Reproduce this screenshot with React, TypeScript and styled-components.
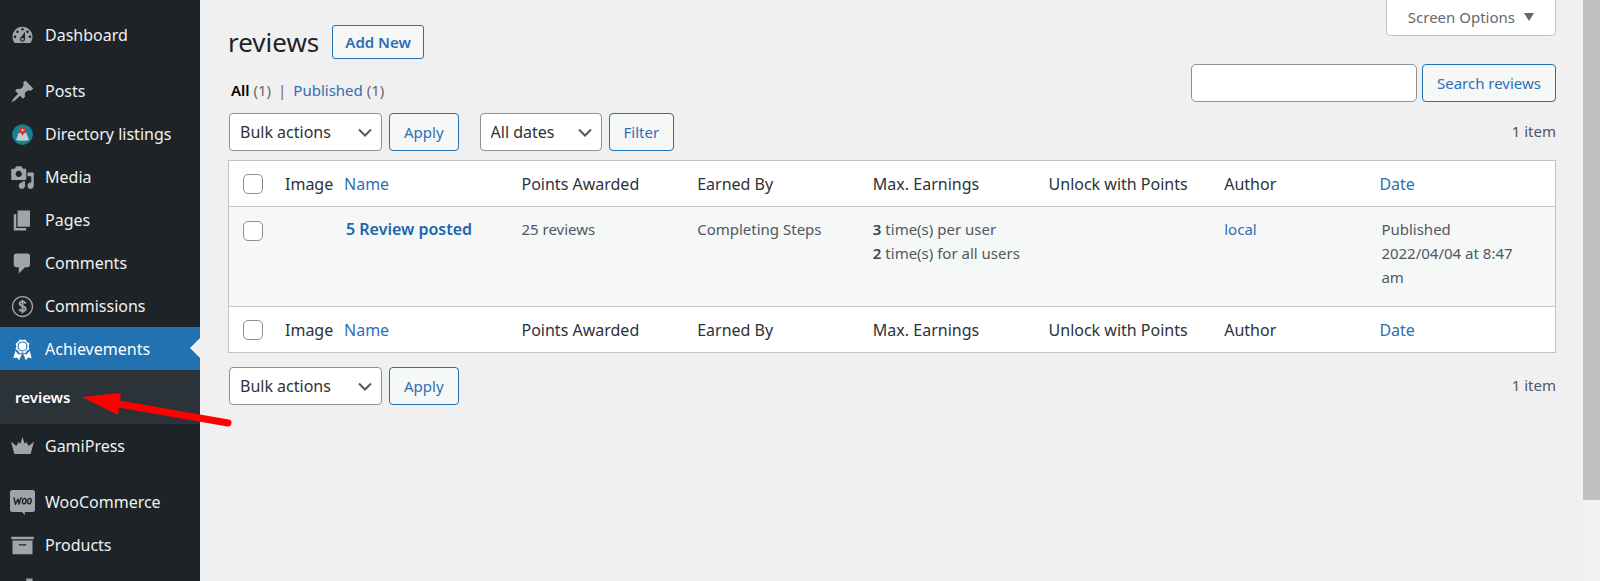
import React from "react";
import styled, { createGlobalStyle } from "styled-components";

const GlobalStyle = createGlobalStyle`
  *, *::before, *::after { box-sizing: border-box; }
  body {
    margin: 0;
    background: #f0f0f0;
    color: #3c434a;
    font-family: "Noto Sans", "Open Sans", sans-serif;
    font-size: 15px;
    line-height: 24px;
  }
  button, input, select { font: inherit; margin: 0; }
  a { color: #2e6fb3; text-decoration: none; }
`;

const Shell = styled.div`
  display: flex;
  height: 100vh;
  overflow: hidden;
`;

/* ---------- Sidebar ---------- */

const Sidebar = styled.nav`
  flex: 0 0 200px;
  padding-top: 13px;
  background: #1d2327;
`;

const Menu = styled.ul`
  margin: 0;
  padding: 0;
  list-style: none;
`;

const MenuItem = styled.li<{ $spaced?: boolean }>`
  position: relative;
  margin-bottom: ${(p) => (p.$spaced ? 13 : 0)}px;
`;

const MenuLink = styled.a<{ $active?: boolean }>`
  display: flex;
  align-items: center;
  gap: 10px;
  height: 43px;
  padding: 1px 0 0 10px;
  font-size: 16px;
  color: ${(p) => (p.$active ? "#fff" : "#f0f0f1")};
  background: ${(p) => (p.$active ? "#2271b1" : "transparent")};
`;

const Glyph = styled.svg<{ $active?: boolean }>`
  flex: none;
  width: 25px;
  height: 25px;
  fill: ${(p) => (p.$active ? "#fff" : "#a0a5aa")};
`;

const Pointer = styled.span`
  position: absolute;
  right: 0;
  top: 11px;
  border: 10px solid transparent;
  border-left: 0;
  border-right-color: #f0f0f0;
`;

const Submenu = styled.div`
  position: relative;
  height: 54px;
  display: flex;
  align-items: center;
  padding-left: 15px;
  background: #2c3338;
`;

const SubmenuLink = styled.a`
  color: #fff;
  font-weight: 600;
`;

const Arrow = styled.svg`
  position: absolute;
  z-index: 2;
  left: 80px;
  top: 18px;
  width: 156px;
  height: 42px;
  pointer-events: none;
`;

const DashboardIcon = () => (
  <path d="M3.76 16h12.48c1.1-1.37 1.76-3.11 1.76-5 0-4.42-3.58-8-8-8s-8 3.58-8 8c0 1.89.66 3.63 1.76 5zM10 4c.55 0 1 .45 1 1s-.45 1-1 1-1-.45-1-1 .45-1 1-1zM6 6c.55 0 1 .45 1 1s-.45 1-1 1-1-.45-1-1 .45-1 1-1zm8 0c.55 0 1 .45 1 1s-.45 1-1 1-1-.45-1-1 .45-1 1-1zm-5.37 5.55L12 7v6c0 1.1-.9 2-2 2s-2-.9-2-2c0-.57.24-1.08.63-1.45zM4 10c.55 0 1 .45 1 1s-.45 1-1 1-1-.45-1-1 .45-1 1-1zm12 0c.55 0 1 .45 1 1s-.45 1-1 1-1-.45-1-1 .45-1 1-1zm-5 3c0-.55-.45-1-1-1s-1 .45-1 1 .45 1 1 1 1-.45 1-1z" />
);

const PinIcon = () => (
  <path d="M10.44 3.02l1.82-1.82 6.36 6.35-1.83 1.82c-1.05-.68-2.48-.57-3.41.36l-.75.75c-.92.93-1.04 2.35-.35 3.41l-1.83 1.82-2.41-2.41-2.8 2.79c-.42.42-3.38 2.71-3.8 2.29s1.86-3.39 2.28-3.81l2.79-2.79L4.1 9.36l1.83-1.82c1.05.69 2.48.57 3.4-.36l.75-.75c.93-.92 1.05-2.35.36-3.41z" />
);

const DirectoryIcon = () => (
  <>
    <circle cx="10" cy="10" r="8.3" fill="#1b7f93" />
    <path d="M6.9 8.8h6.2l2.1 5.6c-1.4.9-9 .9-10.400 0z" fill="#c6cbce" />
    <path d="M10 3.9a2.700 2.700 0 0 1 2.700 2.700c0 1.800-2 2.600-2.700 4.600-.7-2-2.700-2.800-2.700-4.600A2.700 2.700 0 0 1 10 3.900z" fill="#d13a36" />
    <circle cx="10" cy="6.5" r=".9" fill="#e3c9c8" />
  </>
);

const MediaIcon = () => (
  <path d="M13 11V4c0-.55-.45-1-1-1h-1.67L9 1H5L3.67 3H2c-.55 0-1 .45-1 1v7c0 .55.45 1 1 1h10c.55 0 1-.45 1-1zM7 4.5c1.38 0 2.500 1.120 2.500 2.500S8.380 9.500 7 9.500 4.500 8.380 4.500 7 5.620 4.500 7 4.500zM14 6h5v10.500c0 1.380-1.120 2.500-2.500 2.500S14 17.880 14 16.500s1.120-2.500 2.500-2.500c.17 0 .34.02.5.05V9h-3V6zm-4 8.050V13h2v3.500c0 1.380-1.120 2.500-2.500 2.500S7 17.880 7 16.500 8.120 14 9.500 14c.17 0 .34.02.5.05z" />
);

const PagesIcon = () => <path d="M6 15V2h10v13H6zm-1 1h8v2H3V5h2v11z" />;

const CommentsIcon = () => (
  <path d="M5 2h9c1.1 0 2 .9 2 2v7c0 1.1-.9 2-2 2h-2l-5 5v-5H5c-1.1 0-2-.9-2-2V4c0-1.1.9-2 2-2z" />
);

const CommissionsIcon = () => (
  <g fill="none" stroke="#a0a5aa">
    <circle cx="10" cy="10" r="9.400" strokeWidth="1.200" />
    <path d="M12.800 7.300c-.2-1.200-1.300-1.900-2.700-1.900-1.600 0-2.800.8-2.800 2.100 0 3.100 5.700 1.600 5.700 4.600 0 1.400-1.300 2.200-2.900 2.200-1.700 0-2.800-.8-3-2M10 3.700v12.600" strokeWidth="1.800" />
  </g>
);

const AwardIcon = () => (
  <>
    <path
      fillRule="evenodd"
      d="M4.460 5.160L5 7.460l-.54 2.290 2.010 1.240L7.700 13l2.300-.54 2.300.54 1.230-2.010 2.010-1.240L15 7.460l.54-2.300-2-1.240-1.240-2.010-2.300.55-2.290-.54-1.250 2zM10 11.500a4 4 0 1 1 0-8 4 4 0 0 1 0 8z"
    />
    <circle cx="10" cy="7.500" r="3.100" />
    <path d="M4.300 11l2.400 3 2.900-.8-2.300 5.400-1.700-2.300-3 .7zM15.700 11l-2.400 3-2.900-.8 2.300 5.400 1.700-2.300 3 .7z" />
  </>
);

const CrownIcon = () => (
  <path d="M.8 6l4.200 3.600L7 6.400l1.300 1.400L10 2.400l1.700 5.400L13 6.400l2 3.200L19.200 6l-2.700 10h-13z" />
);

const WooIcon = () => (
  <>
    <path d="M2 0h16a2 2 0 0 1 2 2v13.500a2 2 0 0 1-2 2h-6.200l.2 2.500-2.600-2.500H2a2 2 0 0 1-2-2V2a2 2 0 0 1 2-2z" />
    <g fill="none" stroke="#1d2327" strokeWidth="1.100" strokeLinecap="round" strokeLinejoin="round">
      <path d="M3.200 6.400l1.200 5 2-4.100.9 4.100C7.700 9 8.400 7.200 9 6.100" />
      <ellipse cx="11.400" cy="8.900" rx="1.400" ry="2.200" transform="rotate(12 11.400 8.900)" />
      <ellipse cx="15.500" cy="8.900" rx="1.400" ry="2.200" transform="rotate(12 15.500 8.900)" />
    </g>
  </>
);

const ArchiveIcon = () => <path d="M19 3v2H1V3h18zM2 6h16v11H2V6zm11 4V9H7v1h6z" />;

const ChartIcon = () => <path d="M13 2h5v17h-5zM7 8h5v11H7zM1 12h5v7H1z" />;

/* ---------- Main area ---------- */

const Main = styled.main`
  flex: 1;
  min-width: 0;
  padding: 0 27px 0 28px;
`;

const Header = styled.header`
  display: flex;
  justify-content: space-between;
  align-items: flex-start;
  min-height: 64px;
`;

const TitleGroup = styled.div`
  display: flex;
  align-items: center;
  gap: 13px;
  padding-top: 25px;
`;

const Title = styled.h1`
  margin: 0;
  font-size: 26px;
  line-height: 34px;
  font-weight: 400;
  color: #1d2327;
`;

const Button = styled.button<{ $title?: boolean }>`
  height: ${(p) => (p.$title ? 34 : 38)}px;
  padding: 0 ${(p) => (p.$title ? 12 : 14)}px;
  border: 1px solid #2271b1;
  border-radius: ${(p) => (p.$title ? 3 : 4)}px;
  background: #f6f7f7;
  color: #2e6fb3;
  font-weight: ${(p) => (p.$title ? 600 : 400)};
  white-space: nowrap;
`;

const ScreenOptions = styled.button`
  display: flex;
  align-items: center;
  gap: 9px;
  height: 36px;
  padding: 0 21px 2px;
  border: 1px solid #c3c4c7;
  border-top: 0;
  border-radius: 0 0 5px 5px;
  background: #fff;
  color: #646970;
`;

const Triangle = styled.span`
  border: 5px solid transparent;
  border-top: 8px solid #646970;
  border-bottom: 0;
`;

const ViewRow = styled.div`
  display: flex;
  justify-content: space-between;
  align-items: flex-end;
  margin-bottom: 11px;
`;

const Views = styled.ul`
  display: flex;
  gap: 7px;
  margin: 0;
  padding: 0 3px;
  list-style: none;
  color: #646970;

  a[aria-current] { color: #000; font-weight: 600; }
`;

const Search = styled.form`
  display: flex;
  gap: 5px;
`;

const SearchInput = styled.input`
  width: 226px;
  height: 38px;
  padding: 0 10px;
  border: 1px solid #8c8f94;
  border-radius: 5px;
  background: #fff;
`;

const TableNav = styled.div`
  display: flex;
  align-items: center;
  justify-content: space-between;
  padding-left: 1px;
`;

const Controls = styled.div`
  display: flex;
  gap: 21px;
`;

const ControlGroup = styled.div`
  display: flex;
  gap: 7px;
`;

const SelectBox = styled.span<{ $width: number }>`
  position: relative;
  width: ${(p) => p.$width}px;

  select {
    appearance: none;
    width: 100%;
    height: 38px;
    padding: 0 32px 0 10px;
    border: 1px solid #8c8f94;
    border-radius: 4px;
    background: #fff;
    color: #2c3338;
    font-size: 16px;
  }

  svg {
    position: absolute;
    right: 10px;
    top: 15px;
    width: 14px;
    height: 10px;
    fill: none;
    stroke: #50575e;
    stroke-width: 2;
    pointer-events: none;
  }
`;

const Count = styled.span`
  padding-bottom: 2px;
  color: #50575e;
`;

const Table = styled.table`
  width: 100%;
  margin: 9px 0 14px;
  table-layout: fixed;
  border-collapse: separate;
  border-spacing: 0;
  border: 1px solid #c3c4c7;
  background: #fff;

  th, td { padding: 0 8px 0 10px; text-align: left; }
  th { font-size: 16px; font-weight: 400; color: #2c3338; white-space: nowrap; }
  thead th { height: 46px; border-bottom: 1px solid #c3c4c7; }
  tfoot th { height: 46px; border-top: 1px solid #c3c4c7; }
  td {
    height: 99px;
    padding-top: 10px;
    vertical-align: top;
    background: #f6f7f7;
    color: #50575e;
  }
`;

const Col = styled.col<{ $width?: string }>`
  width: ${(p) => p.$width ?? "auto"};
`;

const CheckHead = styled.th`
  && { padding: 0 0 0 14px; }
`;

const CheckCell = styled.td`
  && { padding: 14px 0 0 14px; }
`;

const IndentedCell = styled.td`
  && { padding: 10px 24px 0 12px; }
`;

const Checkbox = styled.input`
  appearance: none;
  display: block;
  width: 20px;
  height: 20px;
  border: 1px solid #8c8f94;
  border-radius: 5px;
  background: #fff;
`;

const RowTitle = styled.a`
  font-size: 16px;
  font-weight: 600;
  color: #1a66ad;
`;

const Strong = styled.b`
  font-weight: 600;
  color: #3c434a;
`;

const ScrollTrack = styled.div`
  flex: 0 0 17px;
  background: #f1f1f1;
`;

const ScrollThumb = styled.div`
  height: 86%;
  background: #c1c1c1;
`;

type Entry = {
  label: string;
  icon: () => React.JSX.Element;
  spaced?: boolean;
  active?: boolean;
};

const entries: Entry[] = [
  { label: "Dashboard", icon: DashboardIcon, spaced: true },
  { label: "Posts", icon: PinIcon },
  { label: "Directory listings", icon: DirectoryIcon },
  { label: "Media", icon: MediaIcon },
  { label: "Pages", icon: PagesIcon },
  { label: "Comments", icon: CommentsIcon },
  { label: "Commissions", icon: CommissionsIcon },
  { label: "Achievements", icon: AwardIcon, active: true },
  { label: "GamiPress", icon: CrownIcon, spaced: true },
  { label: "WooCommerce", icon: WooIcon },
  { label: "Products", icon: ArchiveIcon },
  { label: "", icon: ChartIcon },
];

function Select({ label, value, width }: { label: string; value: string; width: number }) {
  return (
    <SelectBox $width={width}>
      <select aria-label={label}>
        <option>{value}</option>
      </select>
      <svg viewBox="0 0 14 10" aria-hidden="true">
        <path d="M1 1.500l6 6 6-6" />
      </svg>
    </SelectBox>
  );
}

function BulkActions() {
  return (
    <ControlGroup>
      <Select label="Select bulk action" value="Bulk actions" width={153} />
      <Button type="button">Apply</Button>
    </ControlGroup>
  );
}

function HeadingRow() {
  return (
    <tr>
      <CheckHead><Checkbox type="checkbox" aria-label="Select all" /></CheckHead>
      <th>Image</th>
      <th><a href="#name">Name</a></th>
      <th>Points Awarded</th>
      <th>Earned By</th>
      <th>Max. Earnings</th>
      <th>Unlock with Points</th>
      <th>Author</th>
      <th><a href="#date">Date</a></th>
    </tr>
  );
}

export default function App() {
  return (
    <>
      <GlobalStyle />
      <Shell>
        <Sidebar aria-label="Main menu">
          <Menu>
            {entries.map(({ label, icon: Icon, spaced, active }) => (
              <MenuItem key={label} $spaced={spaced}>
                <MenuLink href="#menu" $active={active} aria-label={label || "Analytics"}>
                  <Glyph viewBox="0 0 20 20" $active={active} aria-hidden="true">
                    {Icon === CommissionsIcon ? <g transform="translate(1.500 1.500) scale(.85)"><Icon /></g> : <Icon />}
                  </Glyph>
                  {label}
                </MenuLink>
                {active && (
                  <>
                    <Pointer />
                    <Submenu>
                      <SubmenuLink href="#reviews">reviews</SubmenuLink>
                      <Arrow viewBox="0 0 156 42" aria-hidden="true">
                        <path d="M39 16L148 35" stroke="#f00" strokeWidth="7" strokeLinecap="round" />
                        <path d="M2 9L41 5 38 27z" fill="#f00" />
                      </Arrow>
                    </Submenu>
                  </>
                )}
              </MenuItem>
            ))}
          </Menu>
        </Sidebar>

        <Main>
          <Header>
            <TitleGroup>
              <Title>reviews</Title>
              <Button type="button" $title>Add New</Button>
            </TitleGroup>
            <ScreenOptions type="button">
              Screen Options <Triangle />
            </ScreenOptions>
          </Header>

          <ViewRow>
            <Views>
              <li><a href="#all" aria-current="page">All</a> (1)</li>
              <li>|</li>
              <li><a href="#published">Published</a> (1)</li>
            </Views>
            <Search onSubmit={(e) => e.preventDefault()}>
              <SearchInput type="search" aria-label="Search reviews" />
              <Button type="submit">Search reviews</Button>
            </Search>
          </ViewRow>

          <TableNav>
            <Controls>
              <BulkActions />
              <ControlGroup>
                <Select label="Filter by date" value="All dates" width={122} />
                <Button type="button">Filter</Button>
              </ControlGroup>
            </Controls>
            <Count>1 item</Count>
          </TableNav>

          <Table>
            <colgroup>
              <Col $width="46px" />
              <Col $width="59px" />
              <Col />
              <Col $width="13.25%" />
              <Col $width="13.25%" />
              <Col $width="13.25%" />
              <Col $width="13.25%" />
              <Col $width="11.7%" />
              <Col $width="14%" />
            </colgroup>
            <thead><HeadingRow /></thead>
            <tbody>
              <tr>
                <CheckCell><Checkbox type="checkbox" aria-label="Select 5 Review posted" /></CheckCell>
                <td />
                <IndentedCell><RowTitle href="#edit">5 Review posted</RowTitle></IndentedCell>
                <td>25 reviews</td>
                <td>Completing Steps</td>
                <td>
                  <Strong>3</Strong> time(s) per user<br />
                  <Strong>2</Strong> time(s) for all users
                </td>
                <td />
                <td><a href="#author">local</a></td>
                <IndentedCell>Published<br />2022/04/04 at 8:47 am</IndentedCell>
              </tr>
            </tbody>
            <tfoot><HeadingRow /></tfoot>
          </Table>

          <TableNav>
            <BulkActions />
            <Count>1 item</Count>
          </TableNav>
        </Main>

        <ScrollTrack>
          <ScrollThumb />
        </ScrollTrack>
      </Shell>
    </>
  );
}
